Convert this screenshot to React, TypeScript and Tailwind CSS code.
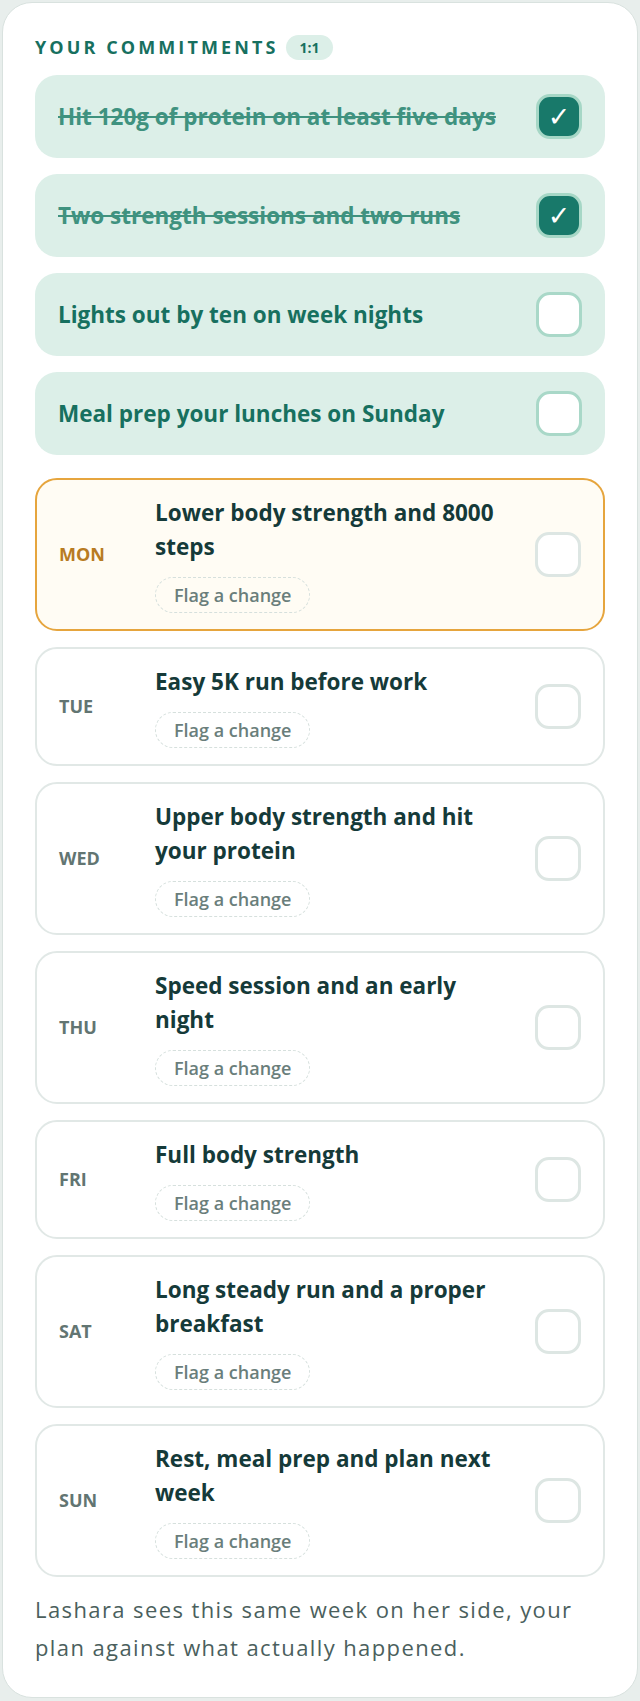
import React from 'react';

// Commitments agreed in the 1:1
const commitments = [
  { text: 'Hit 120g of protein on at least five days', done: true },
  { text: 'Two strength sessions and two runs', done: true },
  { text: 'Lights out by ten on week nights', done: false },
  { text: 'Meal prep your lunches on Sunday', done: false },
];

const week = [
  { day: 'MON', plan: 'Lower body strength and 8000 steps', today: true },
  { day: 'TUE', plan: 'Easy 5K run before work' },
  { day: 'WED', plan: 'Upper body strength and hit your protein' },
  { day: 'THU', plan: 'Speed session and an early night' },
  { day: 'FRI', plan: 'Full body strength' },
  { day: 'SAT', plan: 'Long steady run and a proper breakfast' },
  { day: 'SUN', plan: 'Rest, meal prep and plan next week' },
];

const CommitmentRow: React.FC<{ text: string; done: boolean }> = ({ text, done }) => (
  <div className="flex h-[83px] items-center justify-between rounded-[22px] bg-[#dcefe8] px-[23px]">
    <span
      className={
        done
          ? 'text-[22.5px] font-bold text-[#3f927f] line-through decoration-[1.5px]'
          : 'text-[22.5px] font-bold text-[#17705f]'
      }
    >
      {text}
    </span>
    {done ? (
      <div className="flex h-[45px] w-[46px] shrink-0 items-center justify-center rounded-[14px] border-[3px] border-[#a6d7c6] bg-[#18796a]">
        <span className="font-['DejaVu_Sans',sans-serif] text-[27px] font-bold leading-none text-white">✓</span>
      </div>
    ) : (
      <div className="h-[45px] w-[46px] shrink-0 rounded-[14px] border-[3px] border-[#a9d8c8] bg-white" />
    )}
  </div>
);

const DayRow: React.FC<{ day: string; plan: string; today?: boolean }> = ({ day, plan, today }) => (
  <div
    className={
      today
        ? 'flex items-center rounded-[22px] border-2 border-[#e6a53d] bg-[#fffcf4] px-[22px] py-4'
        : 'flex items-center rounded-[22px] border-2 border-[#e1e8e6] bg-white px-[22px] py-4'
    }
  >
    <span
      className={
        today
          ? 'w-[96px] shrink-0 text-[18px] font-bold text-[#b87b22]'
          : 'w-[96px] shrink-0 text-[18px] font-bold text-[#627572]'
      }
    >
      {day}
    </span>
    <div className="flex min-w-0 flex-1 flex-col items-start gap-[13px] pr-[36px]">
      <p className="text-[22.5px] font-bold leading-[34px] text-[#153a39]">{plan}</p>
      <button className="h-9 rounded-full border-[1.5px] border-dashed border-[#d6e0dd] px-[18px] text-[18px] font-semibold text-[#6a7e7b]">
        Flag a change
      </button>
    </div>
    <div className="h-[45px] w-[46px] shrink-0 rounded-[14px] border-[3px] border-[#dde6e3] bg-white" />
  </div>
);

const App: React.FC = () => {
  return (
    <div className="min-h-screen bg-[#e8eeec] p-[2px] font-['Open_Sans',sans-serif]">
      <div className="rounded-[30px] border border-[#d9e2df] bg-white px-8 pt-8 pb-[31px]">
        {/* Cabeçalho */}
        <div className="mb-[15px] flex h-[25px] items-center gap-2">
          <h2 className="text-[18px] font-bold uppercase tracking-[3.1px] text-[#17705f]">Your commitments</h2>
          <span className="flex h-[25px] items-center rounded-full bg-[#dcefe8] px-[13px] text-[14px] font-bold text-[#17705f]">
            1:1
          </span>
        </div>

        <div className="flex flex-col gap-4">
          {commitments.map((c) => (
            <CommitmentRow key={c.text} text={c.text} done={c.done} />
          ))}
        </div>

        <div className="mt-[23px] flex flex-col gap-4">
          {week.map((d) => (
            <DayRow key={d.day} day={d.day} plan={d.plan} today={d.today} />
          ))}
        </div>

        <p className="mt-[13px] text-[22px] leading-[38px] tracking-[1.4px] text-[#4b5f5d]">
          Lashara sees this same week on her side, your plan against what actually happened.
        </p>
      </div>
    </div>
  );
};

export default App;
